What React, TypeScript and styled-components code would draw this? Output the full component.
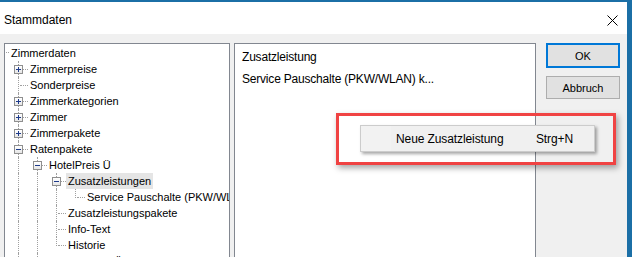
import styled, { createGlobalStyle } from 'styled-components';

type Node = { level: number; label: string; toggle?: '+' | '-'; selected?: boolean };

const nodes: Node[] = [
  { level: 0, label: 'Zimmerdaten' },
  { level: 1, label: 'Zimmerpreise', toggle: '+' },
  { level: 1, label: 'Sonderpreise' },
  { level: 1, label: 'Zimmerkategorien', toggle: '+' },
  { level: 1, label: 'Zimmer', toggle: '+' },
  { level: 1, label: 'Zimmerpakete', toggle: '+' },
  { level: 1, label: 'Ratenpakete', toggle: '-' },
  { level: 2, label: 'HotelPreis Ü', toggle: '-' },
  { level: 3, label: 'Zusatzleistungen', toggle: '-', selected: true },
  { level: 4, label: 'Service Pauschalte (PKW/WLAN)' },
  { level: 3, label: 'Zusatzleistungspakete' },
  { level: 3, label: 'Info-Text' },
  { level: 3, label: 'Historie' },
  { level: 2, label: 'Firmen Preis Ü/ 2 Ang.', toggle: '+' },
  { level: 2, label: 'Gruppen Preis', toggle: '+' },
  { level: 1, label: 'Kontingente', toggle: '+' },
];

// does the branch at column `col` continue below row `i`?
const continues = (i: number, col: number) => {
  for (let j = i + 1; j < nodes.length; j++) {
    if (nodes[j].level < col) return false;
    if (nodes[j].level === col) return true;
  }
  return false;
};

const GlobalStyle = createGlobalStyle`
  body {
    margin: 0;
    background: #1b6fa6;
  }
`;

const Screen = styled.div`
  position: relative;
  width: 632px;
  height: 257px;
  overflow: hidden;
  background: #1b6fa6;
  padding: 2px 5px 0 0;
  box-sizing: border-box;
`;

const Dialog = styled.div`
  display: flex;
  flex-direction: column;
  height: 100%;
  background: #f0f0f0;
`;

const TitleBar = styled.div`
  height: 32px;
  flex-shrink: 0;
  background: #ffffff;
  display: flex;
  align-items: center;
  justify-content: space-between;
  padding: 4px 9px 0 4px;
  box-sizing: border-box;
  font-family: 'Liberation Sans', Arial, sans-serif;
  font-size: 12px;
  color: #000;
`;

const Body = styled.div`
  flex: 1;
  display: flex;
  align-items: flex-start;
  padding: 9px 8px 0 4px;
  min-height: 0;
`;

const TreeBox = styled.div`
  width: 226px;
  height: 240px;
  flex-shrink: 0;
  box-sizing: border-box;
  border: 1px solid #828790;
  background: #ffffff;
  padding-top: 1px;
  overflow: hidden;
`;

const Row = styled.div<{ $root?: boolean }>`
  display: flex;
  height: 16px;
  padding-left: ${(p) => (p.$root ? 1 : 4)}px;
  font-family: 'Liberation Sans', Arial, sans-serif;
  font-size: 11px;
  color: #000;
`;

const RootStub = styled.div`
  width: 3px;
  height: 8px;
  border-bottom: 1px dotted #a0a0a0;
  box-sizing: border-box;
`;

const Guide = styled.div<{ $pipe: 'none' | 'full' | 'half'; $own?: boolean }>`
  position: relative;
  width: 19px;
  flex-shrink: 0;

  &::before {
    content: '';
    display: ${(p) => (p.$pipe === 'none' ? 'none' : 'block')};
    position: absolute;
    left: 9px;
    top: 0;
    height: ${(p) => (p.$pipe === 'half' ? '9px' : '16px')};
    border-left: 1px dotted #a0a0a0;
  }

  &::after {
    content: '';
    display: ${(p) => (p.$own ? 'block' : 'none')};
    position: absolute;
    left: 11px;
    right: 0;
    top: 8px;
    border-top: 1px dotted #a0a0a0;
  }
`;

const Toggle = styled.div<{ $open: boolean }>`
  position: absolute;
  z-index: 1;
  left: 5px;
  top: 4px;
  width: 9px;
  height: 9px;
  box-sizing: border-box;
  border: 1px solid #8f8f8f;
  background: linear-gradient(#ffffff, #e6e6e6);

  &::before {
    content: '';
    position: absolute;
    left: 1px;
    top: 3px;
    width: 5px;
    height: 1px;
    background: #1d3a8a;
  }

  &::after {
    content: '';
    display: ${(p) => (p.$open ? 'none' : 'block')};
    position: absolute;
    left: 3px;
    top: 1px;
    width: 1px;
    height: 5px;
    background: #1d3a8a;
  }
`;

const Label = styled.span<{ $selected?: boolean }>`
  line-height: 16px;
  padding: 0 2px;
  white-space: nowrap;
  background: ${(p) => (p.$selected ? '#e5e5e5' : 'transparent')};
`;

const ListPanel = styled.div`
  width: 302px;
  height: 240px;
  margin-left: 4px;
  flex-shrink: 0;
  box-sizing: border-box;
  border: 1px solid #828790;
  background: #ffffff;
  padding: 5px 0 0 7px;
  display: flex;
  flex-direction: column;
  gap: 6px;
  font-family: 'Liberation Sans', Arial, sans-serif;
  font-size: 12px;
  letter-spacing: -0.2px;
  color: #000;
`;

const ListLine = styled.div`
  line-height: 16px;
  white-space: nowrap;
`;

const Buttons = styled.div`
  margin-left: 10px;
  display: flex;
  flex-direction: column;
  gap: 8px;
`;

const Button = styled.button<{ $default?: boolean }>`
  width: 74px;
  height: ${(p) => (p.$default ? 25 : 23)}px;
  box-sizing: border-box;
  background: #e1e1e1;
  border: ${(p) => (p.$default ? '2px solid #0078d7' : '1px solid #adadad')};
  font-family: 'Liberation Sans', Arial, sans-serif;
  font-size: 11px;
  color: #000;
  padding: 0;
`;

const Highlight = styled.div`
  position: absolute;
  left: 336px;
  top: 113px;
  width: 280px;
  height: 52px;
  box-sizing: border-box;
  border: 3px solid #f04343;
  box-shadow: 2px 3px 6px rgba(0, 0, 0, 0.35);
`;

const Menu = styled.div`
  position: absolute;
  left: 360px;
  top: 125px;
  width: 235px;
  height: 27px;
  box-sizing: border-box;
  border: 1px solid #cccccc;
  background: #f0f0f0;
  box-shadow: 2px 2px 3px rgba(0, 0, 0, 0.35);
  display: flex;
  align-items: center;
  font-family: 'Liberation Sans', Arial, sans-serif;
  font-size: 12px;
  letter-spacing: -0.1px;
  color: #000;
`;

const Gutter = styled.div`
  width: 30px;
  align-self: stretch;
  background: #f2f2f2;
`;

const MenuText = styled.span`
  margin-left: 5px;
  flex: 1;
  white-space: nowrap;
`;

const Shortcut = styled.span`
  margin-right: 21px;
`;

const CloseIcon = () => (
  <svg width="11" height="11" viewBox="0 0 11 11">
    <path d="M0.5 0.5L10.5 10.5M10.5 0.5L0.5 10.5" stroke="#000" strokeWidth="1" />
  </svg>
);

const App = () => (
  <>
    <GlobalStyle />
    <Screen>
      <Dialog>
        <TitleBar>
          <span>Stammdaten</span>
          <CloseIcon />
        </TitleBar>
        <Body>
          <TreeBox>
            {nodes.map((n, i) => (
              <Row key={i} $root={n.level === 0}>
                {n.level === 0 && <RootStub />}
                {Array.from({ length: n.level }, (_, k) => {
                  const col = k + 1;
                  const own = col === n.level;
                  const more = continues(i, col);
                  const pipe = own ? (more ? 'full' : 'half') : more ? 'full' : 'none';
                  return (
                    <Guide key={k} $pipe={pipe} $own={own}>
                      {own && n.toggle && <Toggle $open={n.toggle === '-'} />}
                    </Guide>
                  );
                })}
                <Label $selected={n.selected}>{n.label}</Label>
              </Row>
            ))}
          </TreeBox>
          <ListPanel>
            <ListLine>Zusatzleistung</ListLine>
            <ListLine>Service Pauschalte (PKW/WLAN) k...</ListLine>
          </ListPanel>
          <Buttons>
            <Button $default>OK</Button>
            <Button>Abbruch</Button>
          </Buttons>
        </Body>
      </Dialog>
      <Highlight />
      <Menu>
        <Gutter />
        <MenuText>Neue Zusatzleistung</MenuText>
        <Shortcut>Strg+N</Shortcut>
      </Menu>
    </Screen>
  </>
);

export default App;
